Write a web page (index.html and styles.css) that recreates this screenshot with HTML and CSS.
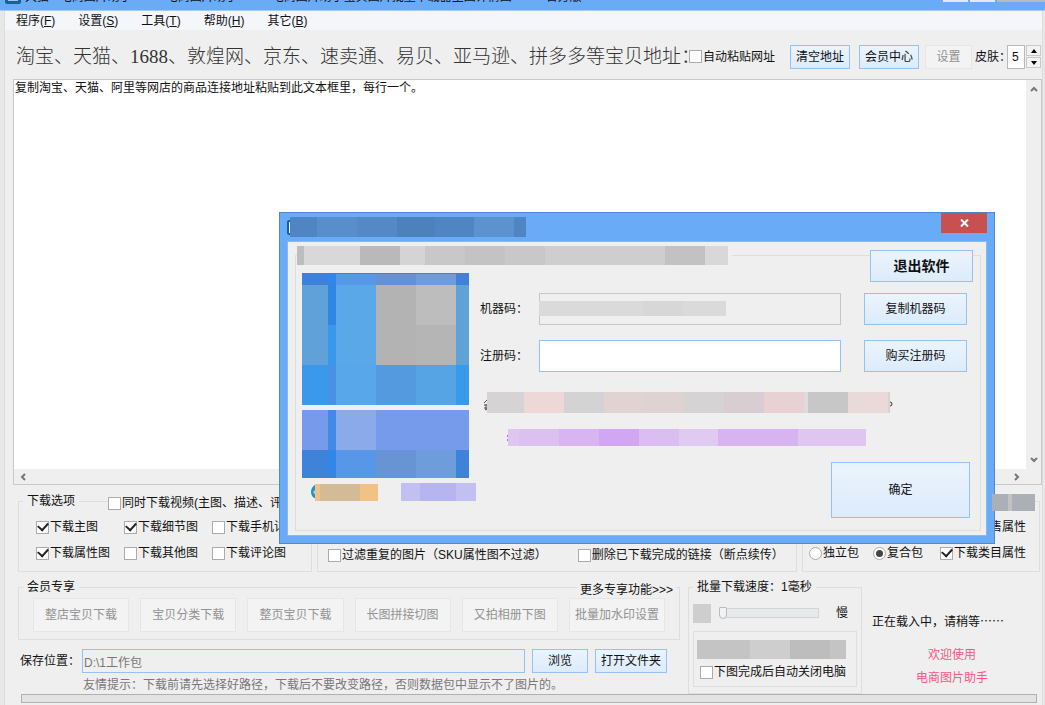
FILE: index.html
```html
<!DOCTYPE html>
<html lang="zh-CN">
<head>
<meta charset="utf-8">
<title>电商图片助手</title>
<link rel="stylesheet" href="styles.css">
</head>
<body>
<div class="window">
  <header class="titlebar">
    <svg class="app-icon" width="16" height="16" viewBox="0 0 16 16" aria-hidden="true"><rect width="16" height="16" rx="2" fill="#17629c"/><rect x="3" y="3" width="10" height="10" fill="#9fc6e4"/></svg>
    <div class="title-text"><span>天猫 - 电商图片助手</span><span>电商图片助手</span><span>电商图片助手宝贝图片批量下载器主图详情图</span><span>官方版</span></div>
    <div class="caption-tabs" aria-hidden="true"><i></i><i></i><i class="last"></i></div>
  </header>

  <nav class="menubar">
    <button>程序(<u>F</u>)</button>
    <button>设置(<u>S</u>)</button>
    <button>工具(<u>T</u>)</button>
    <button>帮助(<u>H</u>)</button>
    <button>其它(<u>B</u>)</button>
  </nav>

  <div class="toolbar">
    <label class="headline" for="urls">淘宝、天猫、1688、敦煌网、京东、速卖通、易贝、亚马逊、拼多多等宝贝地址：</label>
    <label class="check auto-paste"><input type="checkbox">自动粘贴网址</label>
    <button class="btn">清空地址</button>
    <button class="btn">会员中心</button>
    <button class="btn settings" disabled>设置</button>
    <label class="skin" for="skin">皮肤：</label>
    <input class="skin-input" id="skin" type="text" value="5">
    <div class="spinner">
      <button aria-label="增加"><svg width="6" height="4" viewBox="0 0 6 4"><path d="M3 0 6 4H0z"/></svg></button>
      <button aria-label="减少"><svg width="6" height="4" viewBox="0 0 6 4"><path d="M0 0H6L3 4z"/></svg></button>
    </div>
  </div>

  <main class="content">
    <div class="editor">
      <textarea id="urls" spellcheck="false">复制淘宝、天猫、阿里等网店的商品连接地址粘贴到此文本框里，每行一个。</textarea>
      <div class="scroll vertical" aria-hidden="true">
        <svg width="8" height="6" viewBox="0 0 8 6"><path d="M1 5 4 2 7 5"/></svg>
        <svg width="8" height="6" viewBox="0 0 8 6"><path d="M1 1 4 4 7 1"/></svg>
      </div>
      <div class="scroll horizontal" aria-hidden="true">
        <svg width="6" height="8" viewBox="0 0 6 8"><path d="M5 1 2 4 5 7"/></svg>
        <svg width="6" height="8" viewBox="0 0 6 8"><path d="M1 1 4 4 1 7"/></svg>
      </div>
    </div>

    <div class="options">
      <fieldset class="group download-options">
        <legend>下载选项</legend>
        <label class="check video"><input type="checkbox">同时下载视频(主图、描述、评论)</label>
        <label class="check"><input type="checkbox" checked>下载主图</label>
        <label class="check"><input type="checkbox" checked>下载细节图</label>
        <label class="check"><input type="checkbox">下载手机详情</label>
        <label class="check"><input type="checkbox" checked>下载属性图</label>
        <label class="check"><input type="checkbox">下载其他图</label>
        <label class="check"><input type="checkbox">下载评论图</label>
      </fieldset>
      <fieldset class="group filter-options">
        <label class="check"><input type="checkbox">过滤重复的图片（SKU属性图不过滤）</label>
        <label class="check"><input type="checkbox">删除已下载完成的链接（断点续传）</label>
      </fieldset>
      <fieldset class="group package-options">
        <svg class="tag-mosaic" width="43" height="17" viewBox="0 0 43 17" aria-hidden="true"><rect width="43" height="17" fill="#abafb6"/><rect x="16" width="4" height="17" fill="#c2c2c2"/></svg>
        <label class="check sale"><input type="checkbox">下载销售属性</label>
        <label class="check"><input type="radio" name="pack">独立包</label>
        <label class="check"><input type="radio" name="pack" checked>复合包</label>
        <label class="check"><input type="checkbox" checked>下载类目属性</label>
      </fieldset>
    </div>

    <div class="lower">
      <div class="lower-main">
        <fieldset class="group member">
          <legend>会员专享</legend>
          <a class="more" href="#">更多专享功能&gt;&gt;&gt;</a>
          <button class="btn" disabled>整店宝贝下载</button>
          <button class="btn" disabled>宝贝分类下载</button>
          <button class="btn" disabled>整页宝贝下载</button>
          <button class="btn" disabled>长图拼接切图</button>
          <button class="btn" disabled>又拍相册下图</button>
          <button class="btn" disabled>批量加水印设置</button>
        </fieldset>
        <div class="save-row">
          <label for="path">保存位置：</label>
          <input id="path" type="text" value="D:\1工作包" readonly>
          <button class="btn browse">浏览</button>
          <button class="btn open">打开文件夹</button>
        </div>
        <p class="tip">友情提示：下载前请先选择好路径，下载后不要改变路径，否则数据包中显示不了图片的。</p>
      </div>
      <fieldset class="group speed">
        <legend>批量下载速度：1毫秒</legend>
        <div class="speed-row">
          <span class="speed-mosaic"></span>
          <input type="range" min="0" max="100" value="0" aria-label="批量下载速度">
          <span>慢</span>
        </div>
        <div class="finish">
          <svg width="149" height="19" viewBox="0 0 149 19" aria-hidden="true"><rect width="149" height="19" fill="#c4c4c4"/><rect x="53" width="40" height="19" fill="#cecece"/><rect x="93" width="40" height="19" fill="#bdbdbd"/></svg>
          <label class="check"><input type="checkbox">下图完成后自动关闭电脑</label>
        </div>
      </fieldset>
      <div class="status">
        <p class="loading">正在载入中，请稍等……</p>
        <p class="welcome">欢迎使用</p>
        <p class="welcome">电商图片助手</p>
      </div>
    </div>
    <div class="progress" role="progressbar" aria-label="下载进度"></div>
  </main>
</div>

<div class="dialog" role="dialog" aria-label="注册">
  <header class="dialog-title">
    <svg width="239" height="20" viewBox="0 0 239 20" aria-hidden="true"><rect y="3" width="6" height="15" rx="2" fill="#10649f"/><rect x="2" y="5" width="2" height="11" fill="#e8f4fc"/><rect x="3" width="236" height="20" fill="#5085c3"/><rect x="30" width="40" height="20" fill="#588ecb"/><rect x="70" width="40" height="20" fill="#5489c5"/><rect x="110" width="38" height="20" fill="#4d81bb"/><rect x="187" width="40" height="20" fill="#5c93ce"/></svg>
    <button class="close" aria-label="关闭"><svg width="9" height="8" viewBox="0 0 9 8"><path d="M1 0.5 8 7.5M8 0.5 1 7.5" stroke="#fff" stroke-width="2"/></svg></button>
  </header>
  <div class="dialog-body">
    <fieldset class="group register">
      <legend><svg width="431" height="19" viewBox="0 0 431 19" aria-hidden="true"><rect width="431" height="19" fill="#c8c8c8"/><rect width="7" height="19" fill="#bdbdbd"/><rect x="7" width="56" height="19" fill="#d8d8d8"/><rect x="63" width="40" height="19" fill="#b9b9b9"/><rect x="103" width="25" height="19" fill="#d4d4d4"/><rect x="168" width="40" height="19" fill="#c3c3c3"/><rect x="248" width="120" height="19" fill="#cecece"/><rect x="368" width="40" height="19" fill="#c2c2c2"/><rect x="408" width="23" height="19" fill="#d8d8d8"/></svg></legend>
      <div class="promo">
        <svg width="167" height="132" viewBox="0 0 167 132" aria-hidden="true">
          <rect width="167" height="132" fill="#60a1d8"/>
          <rect width="26" height="12" fill="#3f80db"/><rect x="26" width="8" height="12" fill="#3286e6"/><rect x="34" width="40" height="12" fill="#5897e8"/><rect x="74" width="40" height="12" fill="#6393d4"/><rect x="114" width="40" height="12" fill="#6f9cdb"/><rect x="154" width="13" height="12" fill="#3f82da"/>
          <rect x="26" y="12" width="8" height="40" fill="#3085e5"/><rect x="26" y="52" width="8" height="40" fill="#3a98ec"/>
          <rect x="34" y="12" width="40" height="80" fill="#5aa8e8"/><rect x="74" y="12" width="40" height="80" fill="#b3b3b3"/><rect x="114" y="12" width="40" height="40" fill="#bdbdbd"/><rect x="114" y="52" width="40" height="40" fill="#b5b5b5"/>
          <rect y="92" width="26" height="40" fill="#3b99ec"/><rect x="26" y="92" width="8" height="40" fill="#4791e6"/><rect x="34" y="92" width="40" height="40" fill="#58a7ea"/><rect x="74" y="92" width="40" height="40" fill="#539bde"/><rect x="114" y="92" width="40" height="40" fill="#56a4e3"/><rect x="154" y="92" width="13" height="40" fill="#3b99ec"/>
          <rect x="9" width="158" height="1" fill="#2f86e9"/>
        </svg>
        <svg width="167" height="68" viewBox="0 0 167 68" aria-hidden="true">
          <rect width="167" height="40" fill="#769beb"/><rect x="26" width="8" height="40" fill="#418ae5"/><rect x="34" width="40" height="40" fill="#8aaaea"/>
          <rect y="40" width="167" height="28" fill="#3f82da"/><rect x="26" y="40" width="8" height="28" fill="#3286e6"/><rect x="34" y="40" width="40" height="28" fill="#5897e8"/><rect x="74" y="40" width="40" height="28" fill="#6694d5"/><rect x="114" y="40" width="40" height="28" fill="#6d9ddb"/>
        </svg>
        <svg width="174" height="20" viewBox="0 0 174 20" aria-hidden="true"><path d="M14 1Q9 4 9 9T14 16z" fill="#2592cb"/><path d="M14 6 11 9 14 13z" fill="#8fdcf4"/><rect x="13" y="1" width="63" height="17" fill="#f2c186"/><rect x="18" y="1" width="40" height="17" fill="#d3bb97"/><rect x="99" width="75" height="18" fill="#c2c0f1"/><rect x="118" width="36" height="18" fill="#b6b5f0"/></svg>
      </div>
      <div class="register-form">
        <button class="btn exit">退出软件</button>
        <div class="field-row">
          <label for="machine">机器码：</label>
          <div class="machine"><input id="machine" type="text" readonly><svg width="187" height="15" viewBox="0 0 187 15" aria-hidden="true"><rect width="187" height="15" fill="#dadada"/><rect x="104" width="40" height="15" fill="#d7d7d7"/></svg></div>
          <button class="btn">复制机器码</button>
        </div>
        <div class="field-row">
          <label for="code">注册码：</label>
          <input class="code" id="code" type="text">
          <button class="btn">购买注册码</button>
        </div>
        <svg class="notice" width="413" height="54" viewBox="0 0 413 54" aria-hidden="true">
          <path d="M4 11 7 8M4 13H7M4 16H7M5 18 7 17M6 12V18" stroke="#555" fill="none"/><circle cx="410" cy="12" r="2" fill="none" stroke="#333"/>
          <rect x="7" width="403" height="21" fill="#d5d3d4"/><rect x="44" width="40" height="21" fill="#edd8d7"/><rect x="84" width="40" height="21" fill="#d3d3d3"/><rect x="124" width="40" height="21" fill="#e2d3d3"/><rect x="164" width="40" height="21" fill="#dfd2d2"/><rect x="244" width="40" height="21" fill="#d8cdd0"/><rect x="284" width="40" height="21" fill="#e7d1d3"/><rect x="324" width="4" height="21" fill="#dcdcdc"/><rect x="328" width="40" height="21" fill="#c7c7c7"/><rect x="368" width="40" height="21" fill="#e9dad9"/>
          <rect x="27" y="43" width="1" height="2" fill="#b070e0"/><rect x="27" y="47" width="1" height="2" fill="#b070e0"/>
          <rect x="28" y="37" width="358" height="17" fill="#dec6f0"/><rect x="39" y="37" width="40" height="17" fill="#dbc0f0"/><rect x="79" y="37" width="40" height="17" fill="#d8b5f0"/><rect x="119" y="37" width="40" height="17" fill="#d1a7f1"/><rect x="159" y="37" width="40" height="17" fill="#dbbdf1"/><rect x="199" y="37" width="39" height="17" fill="#e1caf1"/><rect x="238" y="37" width="80" height="17" fill="#d7b4ef"/>
        </svg>
        <button class="btn confirm">确定</button>
      </div>
    </fieldset>
  </div>
</div>
</body>
</html>
```

FILE: styles.css
```css
* {
  box-sizing: border-box;
}

body {
  margin: 0;
  position: relative;
  overflow: hidden;
  background: #efefef;
  color: #111;
  font: 12px/14px "Liberation Sans", "Noto Sans CJK SC", sans-serif;
}

button,
input,
textarea {
  margin: 0;
  padding: 0;
  font: inherit;
  color: inherit;
}

p {
  margin: 0;
}

svg {
  display: block;
  flex: none;
}

label,
legend,
button,
p {
  white-space: nowrap;
}

.window {
  display: flex;
  flex-direction: column;
  height: 100vh;
  border: solid #e8e8e8;
  border-width: 0 2px 0 4px;
  box-shadow: inset 1px 0 #dcdcdc, inset -1px 0 #dcdcdc;
}

.titlebar {
  display: flex;
  align-items: flex-end;
  gap: 4px;
  height: 11px;
  margin: 0 -2px 0 -4px;
  padding: 0 0 5px 5px;
  overflow: hidden;
  background: #6aabf7;
  border-bottom: 1px solid #a5ccf7;
}

.app-icon {
  margin-bottom: 1px;
}

.title-text {
  display: flex;
  flex: 1;
  gap: 34px;
  line-height: 16px;
}

.caption-tabs {
  display: flex;
  align-self: flex-start;
  gap: 2px;
}

.caption-tabs i {
  width: 25px;
  height: 2px;
  background: #e6e9ed;
}

.caption-tabs .last {
  width: 48px;
  background: #b9b9b9;
}

.menubar {
  display: flex;
  gap: 23px;
  margin: 0 1px;
  padding: 3px 11px 2px;
  background: #f4f6f9;
}

.menubar button {
  border: 0;
  background: none;
}

.toolbar {
  display: flex;
  align-items: center;
  height: 49px;
  padding: 4px 2px 0 12px;
}

.headline {
  margin-right: -11px;
  color: #333;
  font-family: "Liberation Serif", "Noto Sans CJK SC", serif;
  font-size: 19px;
  font-weight: 300;
  line-height: 28px;
}

.check {
  display: flex;
  align-items: center;
  gap: 1px;
}

.check input {
  appearance: none;
  display: grid;
  place-items: center;
  flex: none;
  width: 13px;
  height: 13px;
  background: #fff;
  border: 1px solid #ababab;
}

.check input[type="radio"] {
  border-radius: 50%;
}

.check input[type="checkbox"]:checked::before {
  content: "";
  width: 8px;
  height: 5px;
  margin-top: -3px;
  border: solid #222;
  border-width: 0 0 2px 2px;
  rotate: -48deg;
}

.check input[type="radio"]:checked::before {
  content: "";
  width: 7px;
  height: 7px;
  border-radius: 50%;
  background: #444;
}

.auto-paste {
  margin-right: auto;
}

.btn {
  height: 24px;
  background: linear-gradient(#ebf4fc, #dcebfb);
  border: 1px solid #94c2f2;
}

.btn:disabled {
  color: #929292;
  background: #f3f3f3;
  border-color: #e6e6e6;
}

.toolbar .btn {
  width: 60px;
  margin-right: 9px;
}

.toolbar .settings {
  width: 47px;
  margin: 0 3px 0 -3px;
}

.skin {
  margin-right: -4px;
}

.skin-input {
  width: 18px;
  height: 24px;
  padding-left: 4px;
  background: #fff;
  border: 1px solid #b5b8bf;
}

.spinner {
  display: grid;
  gap: 1px;
  margin-left: 1px;
}

.spinner button {
  display: grid;
  place-items: center;
  width: 15px;
  height: 11px;
  background: #f3f3f3;
  border: 1px solid #c9c9c9;
}

.content {
  display: flex;
  flex: 1;
  flex-direction: column;
  min-height: 0;
}

.editor {
  display: grid;
  flex: 1;
  grid-template: 1fr 15px / 1fr 15px;
  margin: 0 1px 0 9px;
  border: 1px solid #c8c9ce;
}

.editor textarea {
  padding: 1px;
  resize: none;
  overflow: hidden;
  background: #fff;
  border: 0;
  outline: 0;
}

.scroll {
  display: flex;
  align-items: center;
  justify-content: space-between;
  background: #efefef;
}

.scroll path {
  fill: none;
  stroke: #777;
  stroke-width: 2;
}

.vertical {
  flex-direction: column;
  padding: 6px 0;
}

.horizontal {
  padding: 0 6px;
}

.group {
  position: relative;
  min-width: 0;
  margin: 0;
  padding: 0;
  border: 1px solid #dedede;
}

.group legend {
  padding: 0 4px;
}

.options {
  display: grid;
  grid-template-columns: 294fr 480fr 238fr;
  gap: 5px;
  margin: 9px 3px 0 14px;
}

.download-options {
  display: grid;
  grid-template-columns: repeat(3, 88px);
  row-gap: 12px;
  padding: 12px 0 11px 17px;
}

.download-options legend {
  margin-left: -13px;
}

.video {
  position: absolute;
  top: -12px;
  left: 89px;
  background: #efefef;
}

.filter-options {
  display: flex;
  align-items: flex-end;
  gap: 31px;
  margin-top: 7px;
  padding: 0 10px 9px;
}

.package-options {
  display: grid;
  grid-template-columns: 64px 67px auto;
  align-content: end;
  justify-content: start;
  row-gap: 12px;
  margin-top: 7px;
  padding: 0 6px 11px;
}

.package-options .sale {
  grid-column: 3;
}

.tag-mosaic {
  position: absolute;
  z-index: 2;
  top: -8px;
  right: 4px;
}

.lower {
  display: flex;
  gap: 8px;
  margin: 8px 3px 0 14px;
}

.lower-main {
  flex: 1;
}

.member {
  display: flex;
  gap: 11px;
  padding: 4px 14px 7px;
}

.member legend {
  margin-left: -10px;
}

.member .btn {
  flex: 1;
  height: 34px;
}

.more {
  position: absolute;
  top: -11px;
  right: 3px;
  padding: 0 3px;
  background: #efefef;
  color: inherit;
  text-decoration: none;
}

.save-row {
  display: flex;
  align-items: center;
  gap: 7px;
  margin: 9px 13px 0 2px;
}

.save-row input {
  flex: 1;
  height: 24px;
  margin-left: -5px;
  padding-left: 1px;
  color: #777;
  background: #efefef;
  border: 1px solid #94c2f2;
}

.browse {
  width: 56px;
}

.open {
  width: 72px;
}

.tip {
  margin: 5px 0 0 65px;
  color: #777;
}

.speed {
  width: 174px;
  padding: 9px 4px 2px;
}

.speed-row {
  display: flex;
  align-items: center;
  height: 20px;
}

.speed-row input {
  appearance: none;
  width: 100px;
  height: 14px;
  margin: 0 17px 0 8px;
  background: linear-gradient(#d4d4d4, #d4d4d4) 4px 2px / 96px 10px no-repeat;
}

.speed-row input::-webkit-slider-runnable-track {
  height: 8px;
  background: linear-gradient(#e7eaea, #e7eaea) 5px 0 / 94px 8px no-repeat;
}

.speed-row input::-webkit-slider-thumb {
  appearance: none;
  width: 8px;
  height: 12px;
  margin-top: -2px;
  background: #f2f2f2;
  border: 1px solid #bbb;
  border-radius: 1px 1px 4px 4px;
}

.speed-mosaic {
  width: 18px;
  height: 19px;
  background: #cecece;
}

.finish {
  margin-top: 8px;
  padding: 8px 3px 7px;
  border: 1px solid #dedede;
}

.finish .check {
  margin: 6px 0 0 3px;
}

.status {
  width: 170px;
  padding: 34px 0 0 2px;
}

.loading {
  margin-bottom: 20px;
  font-family: "Noto Sans CJK SC", sans-serif;
}

.welcome {
  width: 160px;
  margin-bottom: 9px;
  color: #ff5588;
  text-align: center;
}

.progress {
  height: 9px;
  margin: 0 6px 2px 17px;
  background: #e3e3e3;
  border: 1px solid #b0b0b0;
}

.dialog {
  position: absolute;
  top: 212px;
  left: 279px;
  width: 716px;
  padding: 0 7px 7px;
  background: #6aabf7;
  border: 1px solid #5088c8;
}

.dialog-title {
  display: flex;
  align-items: center;
  justify-content: space-between;
  height: 28px;
}

.close {
  display: grid;
  place-items: center;
  align-self: flex-start;
  width: 46px;
  height: 20px;
  background: #c85051;
  border: 0;
}

.dialog-body {
  padding: 4px 5px 4px 7px;
  background: #efefef;
  border: 1px solid #8bb8eb;
}

.register {
  display: flex;
  justify-content: space-between;
  padding: 8px 7px 12px 6px;
}

.register legend {
  margin-left: -5px;
  padding: 0 4px 0 0;
}

.promo {
  display: grid;
  align-content: start;
  gap: 5px;
}

.register-form {
  display: flex;
  flex-direction: column;
  width: 493px;
  margin-top: -23px;
}

.register-form .btn {
  width: 103px;
  height: 32px;
}

.register-form .exit {
  align-self: flex-end;
  margin-bottom: 11px;
  font-size: 14px;
  font-weight: bold;
}

.field-row {
  display: flex;
  align-items: center;
  margin-bottom: 15px;
  padding-right: 6px;
}

.field-row label {
  width: 59px;
}

.machine,
.code {
  flex: 1;
  height: 32px;
  margin-right: 23px;
}

.machine {
  position: relative;
}

.machine input {
  width: 100%;
  height: 32px;
  background: #efefef;
  border: 1px solid #c5c6c9;
}

.machine svg {
  position: absolute;
  top: 8px;
  left: 0;
}

.code {
  background: #fff;
  border: 1px solid #94c2f2;
}

.notice {
  margin-top: 5px;
}

.register-form .confirm {
  align-self: flex-end;
  width: 139px;
  height: 56px;
  margin: 16px 3px 0 0;
}
```
